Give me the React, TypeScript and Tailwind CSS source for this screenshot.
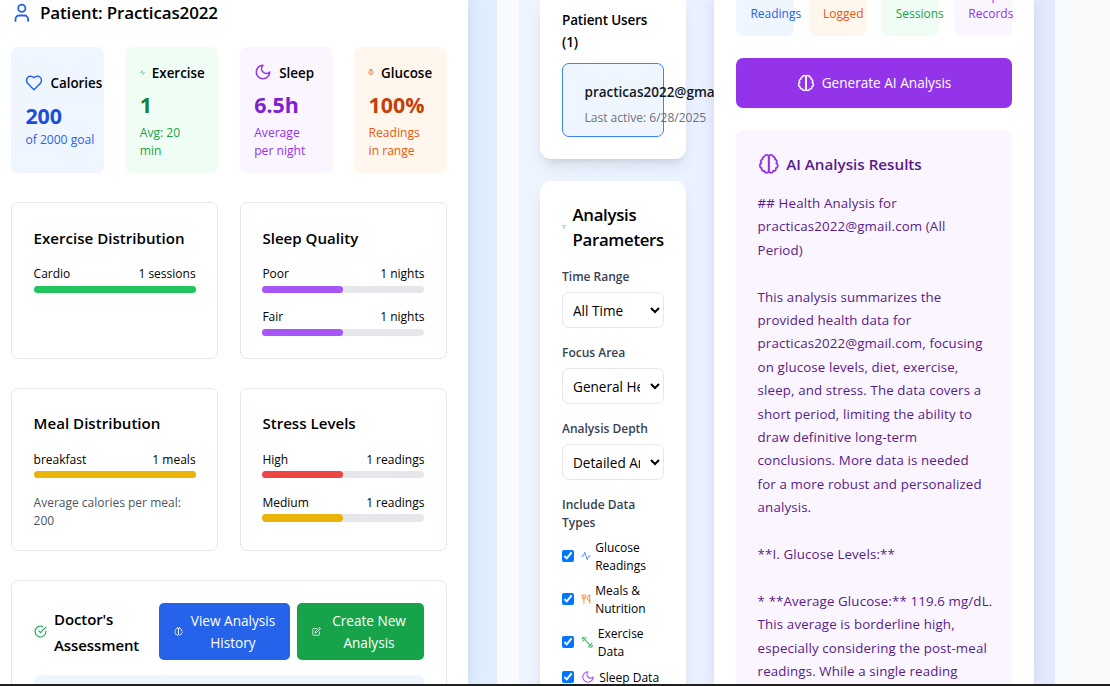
import React from 'react';

type IconProps = { className?: string };

function Svg({ className = '', children }: IconProps & { children: React.ReactNode }) {
  return (
    <svg
      viewBox="0 0 24 24"
      fill="none"
      stroke="currentColor"
      strokeWidth={2}
      strokeLinecap="round"
      strokeLinejoin="round"
      className={'shrink-0 ' + className}
    >
      {children}
    </svg>
  );
}

const UserIcon = (p: IconProps) => (
  <Svg {...p}>
    <path d="M19 21v-2a4 4 0 0 0-4-4H9a4 4 0 0 0-4 4v2" />
    <circle cx="12" cy="7" r="4" />
  </Svg>
);
const HeartIcon = (p: IconProps) => (
  <Svg {...p}>
    <path d="M19 14c1.49-1.46 3-3.21 3-5.5A5.5 5.5 0 0 0 16.5 3c-1.76 0-3 .5-4.5 2-1.5-1.5-2.74-2-4.5-2A5.5 5.5 0 0 0 2 8.5c0 2.3 1.5 4.05 3 5.5l7 7Z" />
  </Svg>
);
const MoonIcon = (p: IconProps) => (
  <Svg {...p}>
    <path d="M12 3a6 6 0 0 0 9 9 9 9 0 1 1-9-9Z" />
  </Svg>
);
const BrainIcon = (p: IconProps) => (
  <Svg {...p}>
    <path d="M9.5 2A2.5 2.5 0 0 1 12 4.5v15a2.5 2.5 0 0 1-4.96.44 2.5 2.5 0 0 1-2.96-3.08 3 3 0 0 1-.34-5.58 2.5 2.5 0 0 1 1.32-4.24 2.5 2.5 0 0 1 1.98-3A2.5 2.5 0 0 1 9.5 2Z" />
    <path d="M14.5 2A2.5 2.5 0 0 0 12 4.5v15a2.5 2.5 0 0 0 4.96.44 2.5 2.5 0 0 0 2.96-3.08 3 3 0 0 0 .34-5.58 2.5 2.5 0 0 0-1.32-4.24 2.5 2.5 0 0 0-1.98-3A2.5 2.5 0 0 0 14.5 2Z" />
  </Svg>
);
const ActivityIcon = (p: IconProps) => (
  <Svg {...p}>
    <path d="M22 12h-4l-3 9L9 3l-3 9H2" />
  </Svg>
);
const UtensilsIcon = (p: IconProps) => (
  <Svg {...p}>
    <path d="M3 2v7c0 1.1.9 2 2 2h4a2 2 0 0 0 2-2V2" />
    <path d="M7 2v20" />
    <path d="M21 15V2a5 5 0 0 0-5 5v6c0 1.1.9 2 2 2h3Zm0 0v7" />
  </Svg>
);
const DumbbellIcon = (p: IconProps) => (
  <Svg {...p}>
    <path d="m6.5 6.5 11 11" />
    <path d="m21 21-1-1" />
    <path d="m3 3 1 1" />
    <path d="m18 22 4-4" />
    <path d="m2 6 4-4" />
    <path d="m3 10 7-7" />
    <path d="m14 21 7-7" />
  </Svg>
);
const FilterIcon = (p: IconProps) => (
  <Svg {...p}>
    <polygon points="22 3 2 3 10 12.46 10 19 14 21 14 12.46 22 3" />
  </Svg>
);
const CheckCircleIcon = (p: IconProps) => (
  <Svg {...p}>
    <path d="M22 11.08V12a10 10 0 1 1-5.93-9.14" />
    <path d="m9 11 3 3L22 4" />
  </Svg>
);
const EditIcon = (p: IconProps) => (
  <Svg {...p}>
    <path d="M11 4H4a2 2 0 0 0-2 2v14a2 2 0 0 0 2 2h14a2 2 0 0 0 2-2v-7" />
    <path d="M18.5 2.5a2.12 2.12 0 0 1 3 3L12 15l-4 1 1-4Z" />
  </Svg>
);

function StatCard(props: {
  box: string;
  icon: React.ReactNode;
  label: string;
  value: string;
  valueClass: string;
  lines: string[];
  lineClass: string;
}) {
  const single = props.lines.length === 1;
  return (
    <div className={'flex h-[126px] flex-col justify-center rounded-[7px] pl-[14.4px] whitespace-nowrap ' + props.box}>
      <div className="flex h-[22px] items-center text-[13.4px] font-semibold text-black">
        {props.icon}
        <span className="mt-[2px]">{props.label}</span>
      </div>
      <div className={'mt-[7px] h-[29px] text-[21.4px] leading-[29px] font-bold ' + props.valueClass}>{props.value}</div>
      <div className={(single ? 'mt-[1px] ' : 'mt-[4px] -mb-px pt-px ') + 'text-[12.1px] leading-[18px] ' + props.lineClass}>
        {props.lines.map((l) => (
          <div key={l}>{l}</div>
        ))}
      </div>
    </div>
  );
}

function Bar(props: { label: string; count: string; fill: string; width: string }) {
  return (
    <div>
      <div className="flex justify-between pt-px text-[12px] leading-[18px] text-black">
        <span>{props.label}</span>
        <span>{props.count}</span>
      </div>
      <div className="mt-[2.6px] h-[7.2px] rounded-full bg-[#e5e7eb]">
        <div className={'h-full rounded-full ' + props.fill + ' ' + props.width} />
      </div>
    </div>
  );
}

function DistCard(props: { title: string; height: string; titlePad: string; children: React.ReactNode }) {
  return (
    <div className={'rounded-[7px] border border-[#e5e7eb] px-[21.6px] pt-[22.4px] ' + props.height}>
      <h4 className={'h-[25.2px] text-[15.1px] leading-[25.2px] font-semibold whitespace-nowrap text-black ' + props.titlePad}>
        {props.title}
      </h4>
      <div className="mt-[13.5px] flex flex-col gap-[14.4px]">{props.children}</div>
    </div>
  );
}

function Field(props: { label: string; value: string }) {
  return (
    <div className="h-[76px]">
      <label className="block h-[25px] pt-px text-[12px] leading-[18px] font-semibold whitespace-nowrap text-[#374151]">
        {props.label}
      </label>
      <select className="h-[36px] w-full rounded-[7px] border border-[#e5e7eb] bg-white pt-px pr-[7px] pl-[6px] text-[13.6px] text-black">
        <option>{props.value}</option>
      </select>
    </div>
  );
}

function DataType(props: { icon: React.ReactNode; lines: string[] }) {
  return (
    <label className="flex items-center whitespace-nowrap">
      <input type="checkbox" checked readOnly className="mr-[7.2px] h-[12px] w-[12px] shrink-0" />
      {props.icon}
      <span className="-mb-px pt-px text-[12px] leading-[18px] text-black">
        {props.lines.map((l) => (
          <span key={l} className="block">
            {l}
          </span>
        ))}
      </span>
    </label>
  );
}

const analysis = [
  '## Health Analysis for',
  'practicas2022@gmail.com (All',
  'Period)',
  '',
  'This analysis summarizes the',
  'provided health data for',
  'practicas2022@gmail.com, focusing',
  'on glucose levels, diet, exercise,',
  'sleep, and stress. The data covers a',
  'short period, limiting the ability to',
  'draw definitive long-term',
  'conclusions. More data is needed',
  'for a more robust and personalized',
  'analysis.',
  '',
  '**I. Glucose Levels:**',
  '',
  '* **Average Glucose:** 119.6 mg/dL.',
  'This average is borderline high,',
  'especially considering the post-meal',
  'readings. While a single reading',
];

function PatientPanel() {
  return (
    <section className="relative h-full w-[468px] shrink-0 overflow-hidden bg-white pr-[21px] pl-[11px] shadow-[0_0_14px_rgba(0,0,0,0.1)]">
      <div className="flex h-[25px] items-center">
        <UserIcon className="h-[21.6px] w-[21.6px] text-[#2563eb]" />
        <h3 className="ml-[7.4px] text-[17px] font-semibold tracking-[-0.15px] whitespace-nowrap text-black">
          Patient: Practicas2022
        </h3>
      </div>

      <div className="mt-[22px] grid grid-cols-4 gap-[21.6px]">
        <StatCard
          box="bg-[#eff6ff]"
          icon={<HeartIcon className="mr-[7px] h-[18px] w-[18px] text-[#2563eb]" />}
          label="Calories"
          value="200"
          valueClass="text-[#1d4ed8]"
          lines={['of 2000 goal']}
          lineClass="text-[#2563eb]"
        />
        <StatCard
          box="bg-[#f0fdf4]"
          icon={<ActivityIcon className="mr-[7px] h-[5px] w-[5px] text-[#16a34a]" />}
          label="Exercise"
          value="1"
          valueClass="text-[#15803d]"
          lines={['Avg: 20', 'min']}
          lineClass="text-[#16a34a]"
        />
        <StatCard
          box="bg-[#faf5ff]"
          icon={<MoonIcon className="mr-[7px] h-[18px] w-[18px] text-[#9333ea]" />}
          label="Sleep"
          value="6.5h"
          valueClass="text-[#7e22ce]"
          lines={['Average', 'per night']}
          lineClass="text-[#9333ea]"
        />
        <StatCard
          box="bg-[#fff7ed]"
          icon={<BrainIcon className="mr-[7px] -ml-[0.5px] h-[6px] w-[6px] text-[#ea580c]" />}
          label="Glucose"
          value="100%"
          valueClass="text-[#c2410c]"
          lines={['Readings', 'in range']}
          lineClass="text-[#ea580c]"
        />
      </div>

      <div className="mt-[29px] grid grid-cols-2 gap-x-[21.6px] gap-y-[28.8px]">
        <DistCard title="Exercise Distribution" height="h-[156.8px]" titlePad="pt-px">
          <Bar label="Cardio" count="1 sessions" fill="bg-[#22c55e]" width="w-full" />
        </DistCard>
        <DistCard title="Sleep Quality" height="h-[156.8px]" titlePad="pt-px">
          <Bar label="Poor" count="1 nights" fill="bg-[#a855f7]" width="w-1/2" />
          <Bar label="Fair" count="1 nights" fill="bg-[#a855f7]" width="w-1/2" />
        </DistCard>
        <DistCard title="Meal Distribution" height="h-[163px]" titlePad="pt-0">
          <Bar label="breakfast" count="1 meals" fill="bg-[#eab308]" width="w-full" />
          <p className="pt-px text-[12px] leading-[18px] whitespace-nowrap text-[#4b5563]">
            Average calories per meal:
            <br />
            200
          </p>
        </DistCard>
        <DistCard title="Stress Levels" height="h-[163px]" titlePad="pt-0">
          <Bar label="High" count="1 readings" fill="bg-[#ef4444]" width="w-1/2" />
          <Bar label="Medium" count="1 readings" fill="bg-[#eab308]" width="w-1/2" />
        </DistCard>
      </div>

      <div className="mt-[29.4px] h-[200px] rounded-[7px] border border-[#e5e7eb] px-[22px] pt-[22px]">
        <div className="flex h-[57px] items-center">
          <CheckCircleIcon className="mr-[7px] h-[13px] w-[13px] text-[#16a34a]" />
          <h4 className="w-[105px] pt-[2px] text-[15px] leading-[26px] font-semibold tracking-[-0.1px] text-black">
            Doctor's
            <br />
            Assessment
          </h4>
          <button className="flex h-[57px] w-[131px] shrink-0 items-center rounded-[5px] bg-[#2563eb] pl-[15px] text-white">
            <BrainIcon className="h-[9px] w-[9px]" />
            <span className="flex-1 pt-[2px] pr-[7px] text-center text-[13.6px] leading-[22px] whitespace-nowrap">
              View Analysis
              <br />
              History
            </span>
          </button>
          <button className="ml-[7px] flex h-[57px] w-[127px] shrink-0 items-center rounded-[5px] bg-[#16a34a] pl-[15px] text-white">
            <EditIcon className="h-[9px] w-[9px]" />
            <span className="flex-1 pt-[2px] pr-[7px] text-center text-[13.6px] leading-[22px] whitespace-nowrap">
              Create New
              <br />
              Analysis
            </span>
          </button>
        </div>
        <div className="mt-[15px] h-[80px] rounded-[7px] bg-[#eff6ff]" />
      </div>
    </section>
  );
}

function Sidebar() {
  const shadow = 'shadow-[0_9px_14px_-3px_rgba(0,0,0,0.1),0_4px_6px_-4px_rgba(0,0,0,0.1)]';
  return (
    <div className="w-[146px] shrink-0">
      <div className={'h-[159px] rounded-b-[11px] bg-white px-[22px] pt-[9px] ' + shadow}>
        <h4 className="text-[13.5px] leading-[22px] font-semibold tracking-[-0.15px] whitespace-nowrap text-black">
          Patient Users
          <br />
          (1)
        </h4>
        <div className="mt-[10px] h-[74px] rounded-[7px] border border-[#3b82f6] bg-[#eff6ff] pt-[17px] pl-[21.5px] whitespace-nowrap">
          <div className="text-[13.5px] leading-[22px] font-semibold text-[#111827]">practicas2022@gmail.com</div>
          <div className="mt-[6px] text-[12px] leading-[18px] text-[#6b7280]">Last active: 6/28/2025</div>
        </div>
      </div>

      <div className={'mt-[22px] h-[560px] rounded-t-[11px] bg-white px-[22px] pt-[21px] ' + shadow}>
        <div className="flex h-[50px] items-center">
          <FilterIcon className="mr-[6.5px] h-[4px] w-[4px] text-[#16a34a]" />
          <h3 className="text-[16.8px] leading-[25px] font-semibold tracking-[-0.3px] text-black">
            Analysis
            <br />
            Parameters
          </h3>
        </div>
        <div className="mt-[15px]">
          <Field label="Time Range" value="All Time" />
          <Field label="Focus Area" value="General Health" />
          <Field label="Analysis Depth" value="Detailed Analysis" />
        </div>
        <div className="pt-px text-[12px] leading-[18px] font-semibold text-[#374151]">
          Include Data
          <br />
          Types
        </div>
        <div className="mt-[6px] flex flex-col gap-[7.2px]">
          <DataType
            icon={<ActivityIcon className="mr-[4px] h-[10px] w-[10px] text-[#3b82f6]" />}
            lines={['Glucose', 'Readings']}
          />
          <DataType
            icon={<UtensilsIcon className="mr-[4px] h-[10px] w-[10px] text-[#f97316]" />}
            lines={['Meals &', 'Nutrition']}
          />
          <DataType
            icon={<DumbbellIcon className="mr-[4px] h-[12.6px] w-[12.6px] text-[#22c55e]" />}
            lines={['Exercise', 'Data']}
          />
          <DataType
            icon={<MoonIcon className="mr-[4px] h-[14px] w-[14px] text-[#a855f7]" />}
            lines={['Sleep Data']}
          />
        </div>
      </div>
    </div>
  );
}

function Tile({ box, lines }: { box: string; lines: string[] }) {
  return (
    <div
      className={
        'flex h-[36px] flex-col justify-end rounded-b-[7px] pb-[13px] pl-[14.4px] text-[12px] leading-[18px] whitespace-nowrap ' +
        box
      }
    >
      {lines.map((l) => (
        <span key={l}>{l}</span>
      ))}
    </div>
  );
}

function AnalysisPanel() {
  return (
    <div className="relative h-full w-[320px] shrink-0 bg-white px-[22px] shadow-[0_0_14px_rgba(0,0,0,0.1)]">
      <div className="grid grid-cols-4 gap-[14.6px]">
        <Tile box="bg-[#eff6ff] text-[#2563eb]" lines={['Readings']} />
        <Tile box="bg-[#fff7ed] text-[#ea580c]" lines={['Logged']} />
        <Tile box="bg-[#f0fdf4] text-[#16a34a]" lines={['Sessions']} />
        <Tile box="bg-[#faf5ff] text-[#9333ea]" lines={['Sleep', 'Records']} />
      </div>
      <button className="mt-[22px] flex h-[50px] w-full items-center justify-center rounded-[7px] bg-[#9333ea] text-[13.6px] text-white">
        <BrainIcon className="mr-[7px] h-[18px] w-[18px]" />
        Generate AI Analysis
      </button>
      <div className="mt-[22px] h-[600px] rounded-[7px] bg-[#faf5ff] pt-[21px] pl-[21.6px]">
        <div className="flex h-[26px] items-center text-[#9333ea]">
          <BrainIcon className="mr-[7px] h-[21.6px] w-[21.6px]" />
          <h4 className="text-[15.2px] font-semibold whitespace-nowrap text-[#581c87]">AI Analysis Results</h4>
        </div>
        <div className="mt-[15px] text-[13.3px] leading-[23.4px] tracking-[0.13px] whitespace-pre text-[#581c87]">
          {analysis.join('\n')}
        </div>
      </div>
    </div>
  );
}

export default function App() {
  return (
    <div className="flex h-[686px] w-[1110px] flex-col overflow-hidden bg-[#f9fafb] font-['Open_Sans','Noto_Sans',sans-serif]">
      <div className="flex h-[684px] shrink-0 overflow-hidden">
        <div className="flex h-full w-[497px] shrink-0 bg-[#e0edfe]">
          <PatientPanel />
        </div>
        <div className="ml-[22px] flex h-full w-[536px] shrink-0 bg-linear-to-r from-[#edf4ff] to-[#e3eaff] pl-[21px]">
          <Sidebar />
          <div className="ml-[28px] h-full">
            <AnalysisPanel />
          </div>
        </div>
      </div>
      <div className="h-[2px] shrink-0 bg-[#202020]" />
    </div>
  );
}
